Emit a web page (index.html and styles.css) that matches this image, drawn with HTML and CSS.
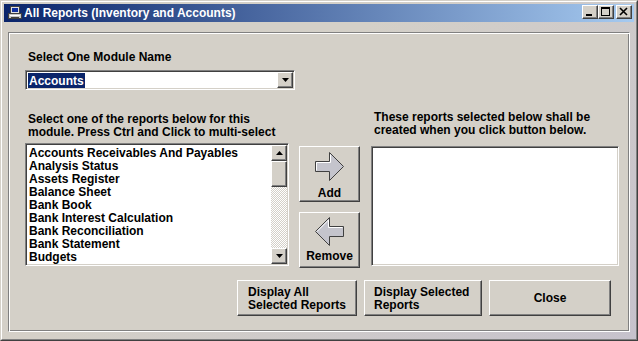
FILE: index.html
```html
<!DOCTYPE html>
<html lang="en">
<head>
    <meta charset="UTF-8">
    <title>All Reports (Inventory and Accounts)</title>
    <link rel="stylesheet" href="styles.css">
</head>
<body>

<div class="window">
    <div class="frame">
        <div class="titlebar">
            <svg class="app-icon" width="14" height="14" viewBox="0 0 14 14">
                <rect x="2.5" y="0.5" width="9" height="7" fill="#e0e0e0" stroke="#404040"/>
                <rect x="4" y="2" width="6" height="4" fill="#1030a0"/>
                <rect x="0.5" y="7.5" width="13" height="5" fill="#c8c8c8" stroke="#404040"/>
                <rect x="2" y="9" width="10" height="1" fill="#ffffff"/>
                <rect x="3" y="11" width="8" height="1" fill="#404040"/>
            </svg>
            <span class="title">All Reports (Inventory and Accounts)</span>
            <div class="caption-btns">
                <button class="raised cap-btn">
                    <svg width="14" height="12" viewBox="0 0 14 12"><rect x="3" y="8" width="6" height="2" fill="#000"/></svg>
                </button>
                <button class="raised cap-btn">
                    <svg width="14" height="12" viewBox="0 0 14 12"><rect x="2.5" y="1.5" width="8" height="8" fill="none" stroke="#000"/><rect x="2" y="2" width="9" height="1" fill="#000"/></svg>
                </button>
                <button class="raised cap-btn close-btn">
                    <svg width="14" height="12" viewBox="0 0 14 12"><path d="M3 2l7 7M10 2l-7 7" stroke="#000" stroke-width="1.6"/></svg>
                </button>
            </div>
        </div>

        <div class="panel">
            <div class="module-label">Select One Module Name</div>
            <div class="sunken combo">
                <span class="sel">Accounts</span>
                <span class="raised combo-btn">
                    <svg width="7" height="4" viewBox="0 0 7 4"><path d="M0 0h7L3.5 4z" fill="#000"/></svg>
                </span>
            </div>

            <div class="lists">
                <div class="left-label">Select one of the reports below for this<br>module. Press Ctrl and Click to multi-select</div>
                <div class="right-label">These reports selected below shall be<br>created when you click button below.</div>

                <div class="sunken listbox source">
                    <ul class="items">
                        <li>Accounts Receivables And Payables</li>
                        <li>Analysis Status</li>
                        <li>Assets Register</li>
                        <li>Balance Sheet</li>
                        <li>Bank Book</li>
                        <li>Bank Interest Calculation</li>
                        <li>Bank Reconciliation</li>
                        <li>Bank Statement</li>
                        <li>Budgets</li>
                    </ul>
                    <div class="vscroll">
                        <span class="raised sb-btn">
                            <svg width="7" height="4" viewBox="0 0 7 4"><path d="M3.5 0L7 4H0z" fill="#000"/></svg>
                        </span>
                        <span class="raised thumb"></span>
                        <span class="raised sb-btn sb-down">
                            <svg width="7" height="4" viewBox="0 0 7 4"><path d="M0 0h7L3.5 4z" fill="#000"/></svg>
                        </span>
                    </div>
                </div>

                <div class="move-btns">
                    <button class="raised move-btn add-btn">
                        <svg width="29" height="30" viewBox="0 0 29 30">
                            <polygon points="0.5,9.5 14.5,9.5 14.5,0.5 28.5,14.5 14.5,28.5 14.5,19.5 0.5,19.5" fill="#c4c4cc" stroke="#404040"/>
                            <path d="M1.5 18.5v-8h14v-8" fill="none" stroke="#ffffff"/>
                        </svg>
                        <span>Add</span>
                    </button>
                    <button class="raised move-btn remove-btn">
                        <svg width="29" height="30" viewBox="0 0 29 30">
                            <polygon points="28.5,9.5 14.5,9.5 14.5,0.5 0.5,14.5 14.5,28.5 14.5,19.5 28.5,19.5" fill="#c4c4cc" stroke="#404040"/>
                            <path d="M2 14.5l11.5-11.5v7.5h14" fill="none" stroke="#ffffff"/>
                        </svg>
                        <span>Remove</span>
                    </button>
                </div>

                <div class="sunken listbox target"></div>
            </div>

            <div class="actions">
                <button class="raised action-btn all-btn">Display All<br>Selected Reports</button>
                <button class="raised action-btn sel-btn">Display Selected<br>Reports</button>
                <button class="raised action-btn close-action">Close</button>
            </div>
        </div>
    </div>
</div>

</body>
</html>
```

FILE: styles.css
```css
body { margin: 0; background: #d4d0c8; font: bold 12px/13px "Liberation Sans", Arial, sans-serif; color: #000; }
button { font: inherit; color: inherit; margin: 0; padding: 0; background: #d4d0c8; }

.raised { box-sizing: border-box; border: 1px solid; border-color: #fff #404040 #404040 #fff; box-shadow: inset -1px -1px #808080; background: #d4d0c8; }
.sunken { box-sizing: border-box; border: 1px solid; border-color: #808080 #fff #fff #808080; padding: 1px; box-shadow: inset 1px 1px #404040, inset -1px -1px #d4d0c8; background: #fff; }

.window { width: 638px; height: 341px; box-sizing: border-box; border: 1px solid; border-color: #d4d0c8 #404040 #404040 #d4d0c8; }
.frame { height: 100%; box-sizing: border-box; border: 1px solid; border-color: #fff #808080 #808080 #fff; padding: 2px; background: linear-gradient(135deg, #d4d0c8 40%, #c6c2cc); }

.titlebar { height: 18px; display: flex; align-items: center; padding: 0 2px 0 4px; background: linear-gradient(to right, #0a246a, #a6caf0); color: #fff; }
.app-icon { margin-right: 2px; }
.title { white-space: nowrap; }
.caption-btns { margin: 1px 0 0 auto; align-self: flex-start; display: flex; }
.cap-btn { width: 16px; height: 14px; display: flex; }
.close-btn { margin-left: 2px; }

.panel { margin: 10px 4px 0; height: 300px; box-sizing: border-box; border: 1px solid; border-color: #808080 #fff #fff #808080; box-shadow: inset 1px 1px #fff, inset -1px -1px #808080; padding: 17px 8px 0 16px; background: #d4d0c8; }

.module-label { padding: 1px 0 0 3px; }
.combo { width: 270px; height: 20px; margin-top: 6px; display: flex; align-items: center; }
.sel { background: #0a246a; color: #fff; padding: 1px 1px 0; margin-left: 1px; line-height: 14px; }
.combo-btn { margin-left: auto; width: 16px; height: 16px; display: flex; align-items: center; justify-content: center; }

.lists { margin-top: 20px; display: grid; grid-template-columns: 264px 61px 249px; column-gap: 10px; row-gap: 4px; }
.left-label { grid-column: 1; margin-top: 3px; padding-left: 3px; white-space: nowrap; }
.right-label { grid-column: 3; margin-top: 1px; padding-left: 4px; white-space: nowrap; }

.listbox { display: flex; }
.source { grid-column: 1; height: 123px; }
.target { grid-column: 3; height: 120px; width: 248px; margin: 3px 0 0 1px; }
.items { flex: 1; list-style: none; margin: 0; padding: 2px 0 0 2px; overflow: hidden; white-space: nowrap; }

.vscroll { width: 16px; display: flex; flex-direction: column; background: repeating-conic-gradient(#d4d0c8 0 25%, #fff 0 50%) 0 0 / 2px 2px; }
.sb-btn { height: 16px; display: flex; align-items: center; justify-content: center; }
.sb-down { margin-top: auto; }
.thumb { height: 26px; }

.move-btns { grid-column: 2; margin-top: 3px; display: flex; flex-direction: column; gap: 10px; }
.move-btn { width: 61px; height: 56px; display: flex; flex-direction: column; align-items: center; }
.add-btn { padding-top: 5px; gap: 5px; }
.remove-btn { padding-top: 4px; gap: 3px; }

.actions { margin: 12px 10px 0 0; display: flex; justify-content: flex-end; gap: 7px; }
.action-btn { height: 36px; text-align: left; white-space: nowrap; }
.all-btn { width: 120px; padding: 1px 0 0 10px; }
.sel-btn { width: 118px; padding: 1px 0 0 9px; }
.close-action { width: 122px; text-align: center; }
```
